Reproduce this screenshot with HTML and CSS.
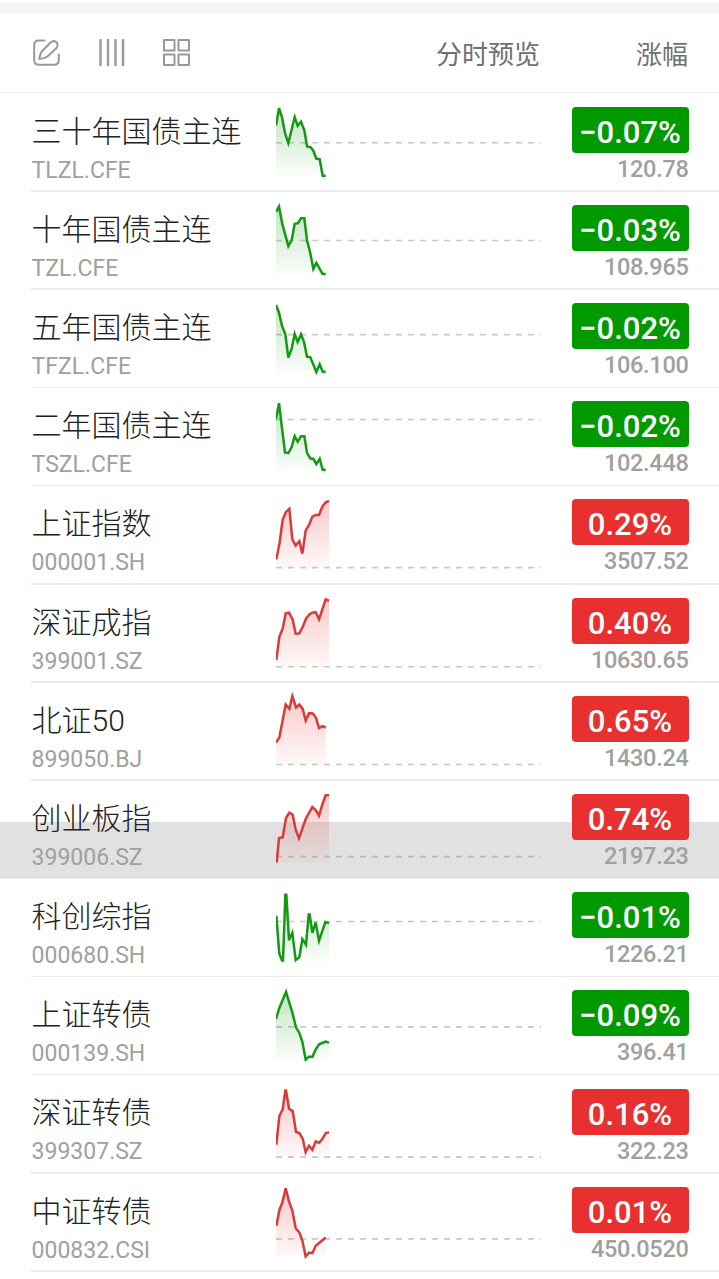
FILE: index.html
```html
<!DOCTYPE html>
<html lang="zh-CN">
<head>
<meta charset="utf-8">
<title>行情列表</title>
<link rel="stylesheet" href="styles.css">
</head>
<body>
<svg class="defs" width="0" height="0" aria-hidden="true">
  <defs>
    <linearGradient id="fall" x1="0" y1="0" x2="0" y2="1"><stop offset="0" stop-color="#159915" stop-opacity=".26"/><stop offset="1" stop-color="#159915" stop-opacity=".02"/></linearGradient>
    <linearGradient id="rise" x1="0" y1="0" x2="0" y2="1"><stop offset="0" stop-color="#e83030" stop-opacity=".26"/><stop offset="1" stop-color="#e83030" stop-opacity=".03"/></linearGradient>
  </defs>
</svg>
<div class="strip"></div>
<header class="toolbar">
  <div class="tools">
    <svg class="icon" viewBox="0 0 28 28"><path d="M11.500 1.500H6Q1.200 1.500 1.200 6.300V21Q1.200 25.800 6 25.800H21Q25.800 25.800 25.800 21V15.500"/><path d="M6.300 20Q6.500 16 8.500 12.800L17.500 3.500Q20.500 1 23.300 3Q25.800 5.800 23.500 9L14.500 17.500Q11 20 6.300 20Z"/></svg>
    <svg class="icon" viewBox="0 0 28 28"><path class="bars" d="M2.500 1V26M10 1V26M17.500 1V26M25 1V26"/></svg>
    <svg class="icon" viewBox="0 0 28 28"><path d="M1 1H11.500V11.500H1ZM15.500 1H26V11.500H15.500ZM1 15.500H11.500V26H1ZM15.500 15.500H26V26H15.500Z"/></svg>
  </div>
  <span class="col-preview">分时预览</span>
  <span class="col-change">涨幅</span>
</header>
<main class="list">
  <section class="row fall">
    <div class="info"><div class="name">三十年国债主连</div><div class="code">TLZL.CFE</div></div>
    <svg class="chart" viewBox="48 -4.2 795 294.6"><path class="base" d="M48 142H843"/><path class="area" d="M48 90L57 38L66 66L75 113L85 143L104 65L113 91L123 79L133 105L141 153L151 155L160 166L169 190L179 191L188 241H197V242H48Z"/><path class="line" d="M48 90L57 38L66 66L75 113L85 143L104 65L113 91L123 79L133 105L141 153L151 155L160 166L169 190L179 191L188 241H197"/></svg>
    <div class="quote"><div class="badge">−0.07%</div><div class="price">120.78</div></div>
  </section>
  <section class="row fall">
    <div class="info"><div class="name">十年国债主连</div><div class="code">TZL.CFE</div></div>
    <svg class="chart" viewBox="48 290.4 795 294.6"><path class="base" d="M48 436H843"/><path class="area" d="M48 350L57 334L67 387L85 453L95 435L104 386L114 384L123 369H133L141 436L150 470L160 521L169 503L187 535L197 537H48Z"/><path class="line" d="M48 350L57 334L67 387L85 453L95 435L104 386L114 384L123 369H133L141 436L150 470L160 521L169 503L187 535L197 537"/></svg>
    <div class="quote"><div class="badge">−0.03%</div><div class="price">108.965</div></div>
  </section>
  <section class="row fall">
    <div class="info"><div class="name">五年国债主连</div><div class="code">TFZL.CFE</div></div>
    <svg class="chart" viewBox="48 0 795 294.6"><path class="base" d="M48 134H843"/><path class="area" d="M48 45L57 68L66 108L76 133L85 203L95 176L104 132L113 156L123 133L132 156L141 200L151 202L169 246L179 223L188 245H197H48Z"/><path class="line" d="M48 45L57 68L66 108L76 133L85 203L95 176L104 132L113 156L123 133L132 156L141 200L151 202L169 246L179 223L188 245H197"/></svg>
    <div class="quote"><div class="badge">−0.02%</div><div class="price">106.100</div></div>
  </section>
  <section class="row fall">
    <div class="info"><div class="name">二年国债主连</div><div class="code">TSZL.CFE</div></div>
    <svg class="chart" viewBox="48 294.6 795 294.6"><path class="base" d="M48 389H843"/><path class="area" d="M48 388L57 340L66 416L75 488L85 490L95 472L104 439L113 456L123 439H133L141 489L151 506L160 507L169 523L179 507L188 540H197H48Z"/><path class="line" d="M48 388L57 340L66 416L75 488L85 490L95 472L104 439L113 456L123 439H133L141 489L151 506L160 507L169 523L179 507L188 540H197"/></svg>
    <div class="quote"><div class="badge">−0.02%</div><div class="price">102.448</div></div>
  </section>
  <section class="row rise">
    <div class="info"><div class="name">上证指数</div><div class="code">000001.SH</div></div>
    <svg class="chart" viewBox="48 4.2 795 294.6"><path class="base" d="M48 249H843"/><path class="area" d="M49 224L59 173L68 105L78 82L88 73L97 164L107 183L118 170L127 207L137 138L147 121L157 96L167 91H177L187 66L197 53L207 49V249H49Z"/><path class="line" d="M49 224L59 173L68 105L78 82L88 73L97 164L107 183L118 170L127 207L137 138L147 121L157 96L167 91H177L187 66L197 53L207 49"/></svg>
    <div class="quote"><div class="badge">0.29%</div><div class="price">3507.52</div></div>
  </section>
  <section class="row rise">
    <div class="info"><div class="name">深证成指</div><div class="code">399001.SZ</div></div>
    <svg class="chart" viewBox="48 298.8 795 294.6"><path class="base" d="M48 544H843"/><path class="area" d="M49 523L58 454L68 430L77 384L87 382L98 402L107 445L118 444L128 425L138 400L148 387L157 382L167 380L177 402L197 342L207 346V544H49Z"/><path class="line" d="M49 523L58 454L68 430L77 384L87 382L98 402L107 445L118 444L128 425L138 400L148 387L157 382L167 380L177 402L197 342L207 346"/></svg>
    <div class="quote"><div class="badge">0.40%</div><div class="price">10630.65</div></div>
  </section>
  <section class="row rise">
    <div class="info"><div class="name">北证50</div><div class="code">899050.BJ</div></div>
    <svg class="chart" viewBox="48 8.4 795 294.6"><path class="base" d="M48 253H843"/><path class="area" d="M48 187L58 172L77 73L88 86L97 48L108 82L118 73L128 86L137 121L147 99L158 100L168 113L177 144L187 138L197 142V253H48Z"/><path class="line" d="M48 187L58 172L77 73L88 86L97 48L108 82L118 73L128 86L137 121L147 99L158 100L168 113L177 144L187 138L197 142"/></svg>
    <div class="quote"><div class="badge">0.65%</div><div class="price">1430.24</div></div>
  </section>
  <section class="row rise pressed">
    <div class="info"><div class="name">创业板指</div><div class="code">399006.SZ</div></div>
    <svg class="chart" viewBox="48 303 795 294.6"><path class="base" d="M48 530H843"/><path class="area" d="M50 548L57 474L68 472L78 414L88 398L98 404L107 449L117 475L137 417L157 381L167 390L177 407L187 373L197 346H207V548H50Z"/><path class="line" d="M50 548L57 474L68 472L78 414L88 398L98 404L107 449L117 475L137 417L157 381L167 390L177 407L187 373L197 346H207"/></svg>
    <div class="quote"><div class="badge">0.74%</div><div class="price">2197.23</div></div>
  </section>
  <section class="row fall">
    <div class="info"><div class="name">科创综指</div><div class="code">000680.SH</div></div>
    <svg class="chart" viewBox="48 -2.4 795 294.6"><path class="base" d="M48 125H843"/><path class="area" d="M49 108L58 222L66 242H69L76 45H79L87 181L97 159L107 241L118 232L127 178L138 195L146 104H149L157 159L167 128L177 183L196 127L207 130V244H49Z"/><path class="line" d="M49 108L58 222L66 242H69L76 45H79L87 181L97 159L107 241L118 232L127 178L138 195L146 104H149L157 159L167 128L177 183L196 127L207 130"/></svg>
    <div class="quote"><div class="badge">−0.01%</div><div class="price">1226.21</div></div>
  </section>
  <section class="row fall">
    <div class="info"><div class="name">上证转债</div><div class="code">000139.SH</div></div>
    <svg class="chart" viewBox="48 292.2 795 294.6"><path class="base" d="M48 442H843"/><path class="area" d="M48 418L58 385L78 337L97 399L108 443L118 460L127 487L137 540L147 531L157 532L167 510L177 494L197 486L207 489V540H48Z"/><path class="line" d="M48 418L58 385L78 337L97 399L108 443L118 460L127 487L137 540L147 531L157 532L167 510L177 494L197 486L207 489"/></svg>
    <div class="quote"><div class="badge">−0.09%</div><div class="price">396.41</div></div>
  </section>
  <section class="row rise">
    <div class="info"><div class="name">深证转债</div><div class="code">399307.SZ</div></div>
    <svg class="chart" viewBox="48 1.8 795 294.6"><path class="base" d="M48 248H843"/><path class="area" d="M49 211L58 125L68 105L76 48H78L87 103L98 110L108 173L118 176L128 193L137 233L147 214L157 226L167 201L177 205L187 194L197 176L207 174V248H49Z"/><path class="line" d="M49 211L58 125L68 105L76 48H78L87 103L98 110L108 173L118 176L128 193L137 233L147 214L157 226L167 201L177 205L187 194L197 176L207 174"/></svg>
    <div class="quote"><div class="badge">0.16%</div><div class="price">322.23</div></div>
  </section>
  <section class="row rise">
    <div class="info"><div class="name">中证转债</div><div class="code">000832.CSI</div></div>
    <svg class="chart" viewBox="48 296.4 795 294.6"><path class="base" d="M48 491H843"/><path class="area" d="M49 452L58 405L67 382L77 339L87 379L97 406L107 459L118 472L127 496L137 544L147 532L157 534L167 512L197 487V542H49Z"/><path class="line" d="M49 452L58 405L67 382L77 339L87 379L97 406L107 459L118 472L127 496L137 544L147 532L157 534L167 512L197 487"/></svg>
    <div class="quote"><div class="badge">0.01%</div><div class="price">450.0520</div></div>
  </section>
</main>
</body>
</html>
```
FILE: styles.css
```css
* { box-sizing: border-box; }
body {
  margin: 0;
  height: 1279px;
  overflow: hidden;
  background: #fff;
  font-family: Roboto, "Noto Sans CJK SC", sans-serif;
}
.defs { display: block; }
.strip { height: 10px; margin-top: 3px; background: #f4f4f4; }
.toolbar {
  display: flex;
  align-items: center;
  height: 80px;
  padding: 0 31px 0 33px;
  border-bottom: 1.4px solid #ebebeb;
  color: #707070;
  font-size: 26px;
}
.tools { display: flex; gap: 37px; flex: 1; }
.icon { width: 28px; height: 28px; fill: none; stroke: #999; stroke-width: 2; stroke-linecap: round; stroke-linejoin: round; }
.bars { stroke-width: 2.4; }
.col-preview { margin-right: 96px; }
.list { padding-top: 0.6px; }
.row {
  position: relative;
  display: flex;
  height: 98.2px;
  padding: 0 30.500px 0 31px;
}
.row::after {
  content: "";
  position: absolute;
  left: 31px;
  right: 0;
  bottom: 0;
  height: 1.5px;
  background: #ebebeb;
}
.pressed::before {
  content: "";
  position: absolute;
  left: 0;
  right: 0;
  top: 41px;
  bottom: 0;
  background: #e1e1e1;
}
.pressed::after { left: 0; }
.info { position: relative; width: 245px; padding: 16px 0 0 0.6px; white-space: nowrap; }
.name { color: #222; font-size: 30px; font-weight: 300; line-height: 44px; }
.code { color: #a0a0a0; font-size: 23px; line-height: 34px; }
.chart { position: relative; width: 265px; height: 98.2px; flex: none; }
.base { fill: none; stroke: #c8c8c8; stroke-width: 5; stroke-dasharray: 18 18; }
.pressed .base { stroke: #b8b8b8; }
.line { fill: none; stroke-width: 7.500; stroke-linejoin: miter; }
.fall .line { stroke: #159915; }
.rise .line { stroke: #d93a3a; }
.fall .area { fill: url(#fall); }
.rise .area { fill: url(#rise); }
.quote { position: relative; flex: 1; display: flex; flex-direction: column; align-items: flex-end; padding-top: 13.1px; }
.badge {
  width: 117px;
  height: 46px;
  border-radius: 4px;
  color: #fff;
  font-size: 31px;
  font-weight: 500;
  line-height: 51px;
  text-align: center;
}
.fall .badge { background: #009900; }
.rise .badge { background: #e83030; }
.price { color: #a0a0a0; font-size: 23.500px; font-weight: 500; line-height: 33px; letter-spacing: -0.3px; }
```
